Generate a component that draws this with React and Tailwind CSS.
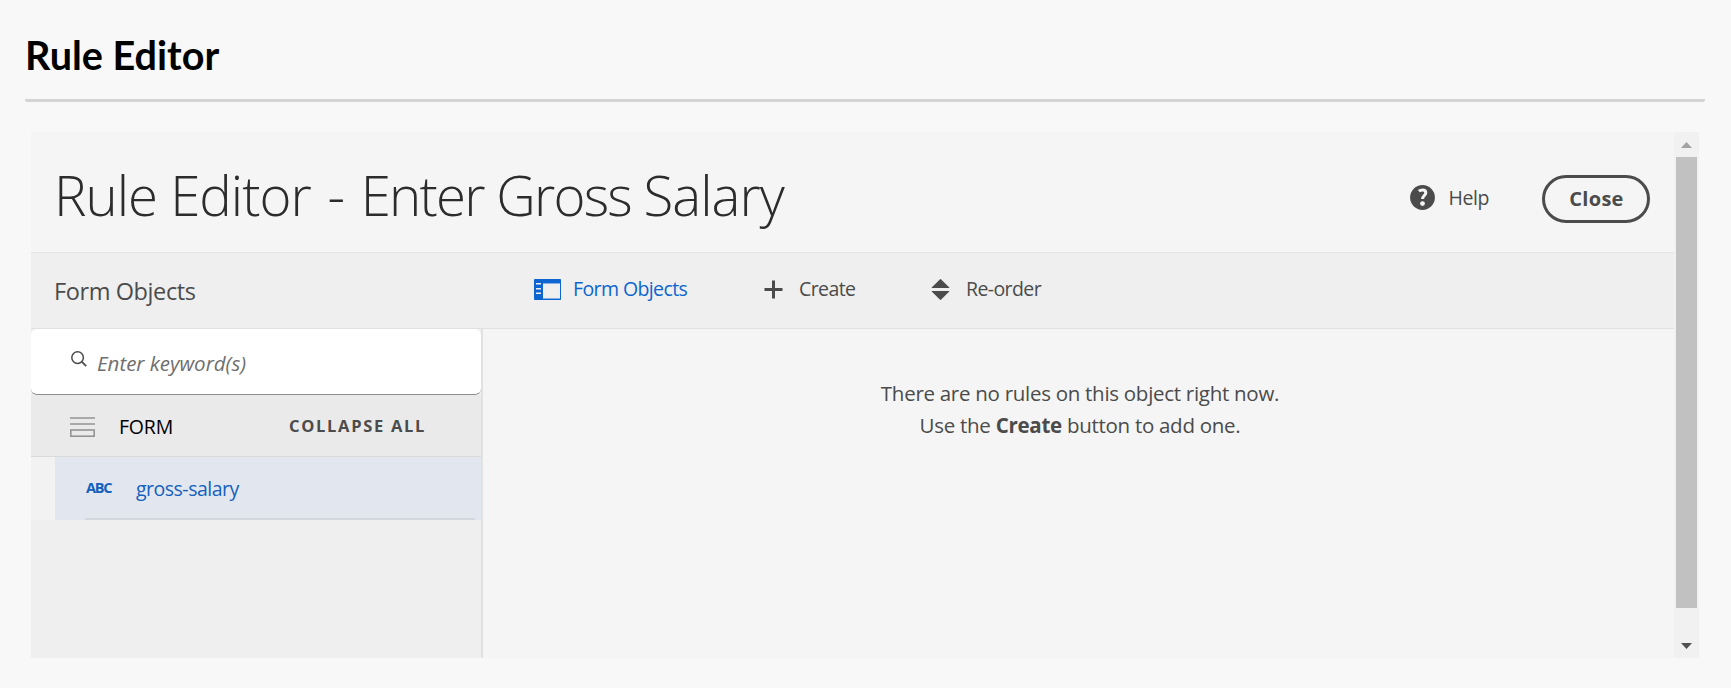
function FormObjectsIcon() {
  return (
    <svg className="block h-[21px] w-[27px] shrink-0" viewBox="0 0 27 21">
      <rect width="27" height="21" rx="0.8" fill="#0d66d0" />
      <rect x="9" y="4" width="17" height="16" fill="#86b0e4" />
      <rect x="9" y="5" width="17" height="14" fill="#efefef" />
      <path d="M2 4.7h5M2 9.7h5M2 14.2h5" stroke="#efefef" strokeWidth="1.5" />
    </svg>
  );
}

function PlusIcon() {
  return (
    <svg className="block h-[19px] w-[19px] shrink-0" viewBox="0 0 19 19">
      <path d="M9.5 0.5v18M0.5 9.5h18" stroke="#4b4b4b" strokeWidth="3" />
    </svg>
  );
}

function ReorderIcon() {
  return (
    <svg className="block h-[21px] w-[19px] shrink-0" viewBox="0 0 19 21" fill="#4b4b4b">
      <path d="M8.8 0.4Q9.5-.2 10.2.4L18.3 8.4Q18.6 9 18 9H1Q.4 9 .7 8.4Z" />
      <path d="M8.8 20.6Q9.5 21.2 10.2 20.6L18.3 12.6Q18.6 12 18 12H1Q.4 12 .7 12.6Z" />
    </svg>
  );
}

function HelpIcon() {
  return (
    <svg className="block h-[25px] w-[25px] shrink-0" viewBox="0 0 25 25">
      <circle cx="12.5" cy="12.5" r="12.4" fill="#4b4b4b" />
      <path d="M8.8 6.2C10 5.2 11.2 4.9 12.6 4.9C14.9 4.9 15.8 6.1 15.8 7.7C15.8 10.4 12.5 10.8 12.6 14" fill="none" stroke="#f5f5f5" strokeWidth="3" />
      <circle cx="12.5" cy="18.6" r="2.4" fill="#f5f5f5" />
    </svg>
  );
}

function SearchIcon() {
  return (
    <svg className="block h-4 w-4 shrink-0" viewBox="0 0 16 16" fill="none" stroke="#4b4b4b">
      <circle cx="6.6" cy="6.6" r="5.8" strokeWidth="1.5" />
      <path d="M10.7 10.7L15.2 15.2" strokeWidth="1.8" />
    </svg>
  );
}

function FormIcon() {
  return (
    <svg className="block h-5 w-[25px] shrink-0" viewBox="0 0 25 20" fill="none" stroke="#949494" strokeWidth="1.6">
      <path d="M0 1h25M0 7h25" />
      <rect x="0.8" y="13" width="23.4" height="6.2" />
    </svg>
  );
}

function Scrollbar() {
  return (
    <div className="flex w-[25px] shrink-0 flex-col items-center bg-[#f1f1f1]">
      <div className="flex h-[25px] items-center justify-center">
        <svg className="block h-[6px] w-[11px]" viewBox="0 0 11 6"><path d="M0 6L5.5 0L11 6Z" fill="#a3a3a3" /></svg>
      </div>
      <div className="h-[451px] w-[21px] bg-[#c1c1c1]" />
      <div className="mt-auto flex h-[25px] items-center justify-center">
        <svg className="block h-[6px] w-[11px]" viewBox="0 0 11 6"><path d="M0 0L5.5 6L11 0Z" fill="#505050" /></svg>
      </div>
    </div>
  );
}

function Sidebar() {
  return (
    <aside className="flex w-[452px] shrink-0 flex-col border-r-2 border-[#e1e1e1] bg-[#efefef]">
      <label className="flex h-[66px] items-center rounded-md border-b border-[#8e8e8e] bg-white pl-10">
        <span className="-mt-[5px]"><SearchIcon /></span>
        <span className="ml-[10px] mt-1 whitespace-nowrap text-[20.5px] italic text-[#6e6e6e]">Enter keyword(s)</span>
      </label>
      <div className="flex h-[62px] items-center border-b border-[#d9dadc] bg-[#eaeaea] pl-[39px] pt-[2px]">
        <FormIcon />
        <span className="ml-[24px] w-[170px] whitespace-nowrap text-[19.5px] tracking-[-0.2px] text-black">FORM</span>
        <button className="whitespace-nowrap text-[16.5px] font-bold tracking-[1.7px] text-[#4b4b4b]">COLLAPSE ALL</button>
      </div>
      <div className="flex h-[63px] bg-[#f2f2f2] pl-6">
        <div className="flex grow flex-col bg-[#e2e7ef] pl-[30px] pr-[6px]">
          <div className="flex grow items-center border-b-2 border-[#d3d8df] pt-[2px] text-[#1460bd]">
            <span className="-mt-px w-[51px] whitespace-nowrap pl-px text-[14.5px] font-bold tracking-[-1.2px]">ABC</span>
            <span className="whitespace-nowrap text-[19.5px] tracking-[-0.5px]">gross-salary</span>
          </div>
        </div>
      </div>
    </aside>
  );
}

export default function App() {
  return (
    <div className="h-[688px] overflow-hidden bg-[#f8f8f8] font-['Open_Sans','Noto_Sans',sans-serif] text-[#4b4b4b]">
      <header className="ml-[25px] mr-[26px] flex h-[102px] items-center rounded-b-xs border-b-3 border-[#d3d5d4] pt-[10px]">
        <h1 className="whitespace-nowrap font-['Lato',sans-serif] text-[39.6px] font-bold leading-none text-black">Rule Editor</h1>
      </header>
      <section className="ml-[31px] mt-[30px] flex h-[526px] w-[1668px] bg-[#f5f5f5]">
        <div className="flex w-[1643px] flex-col">
          <div className="flex h-[121px] items-center border-b border-[#e4e4e4] pl-[23px] pr-6">
            <h2 className="mt-[6px] whitespace-nowrap text-[54.6px] font-light leading-none tracking-[-1px] text-[#2c2c2c]">
              Rule Editor<span className="[word-spacing:3.5px]"> - </span><span className="tracking-[-1.75px]">Enter Gross </span>Salary
            </h2>
            <div className="ml-auto mt-[11px] flex items-center">
              <HelpIcon />
              <span className="ml-[13px] mt-px text-[19.5px] tracking-[-0.4px]">Help</span>
              <button className="ml-[53px] mt-[3px] flex h-12 w-[108px] items-center justify-center rounded-full border-3 border-[#4b4b4b] pl-px text-[20px] font-bold tracking-[0.3px]">Close</button>
            </div>
          </div>
          <div className="flex h-[76px] items-center border-b border-[#e1e1e1] bg-[#efefef]">
            <span className="w-[503px] whitespace-nowrap pl-[23px] pt-[2px] text-[23.5px] tracking-[-0.4px]">Form Objects</span>
            <nav className="flex items-center pb-[3px] text-[19.5px] tracking-[-0.6px]">
              <button className="flex items-center whitespace-nowrap tracking-[-0.6px] text-[#0d66d0]"><FormObjectsIcon /><span className="ml-3 w-[191px] text-left">Form Objects</span></button>
              <button className="flex items-center whitespace-nowrap"><PlusIcon /><span className="ml-[16px] w-[132px] text-left">Create</span></button>
              <button className="flex items-center whitespace-nowrap"><ReorderIcon /><span className="ml-[16px]">Re-order</span></button>
            </nav>
          </div>
          <div className="flex grow">
            <Sidebar />
            <main className="grow pl-[3px] pt-12 text-center text-[20.5px] leading-8 tracking-[-0.28px]">
              <p>There are no rules on this object right now.</p>
              <p>Use the <b className="font-bold">Create</b> button to add one.</p>
            </main>
          </div>
        </div>
        <Scrollbar />
      </section>
    </div>
  );
}
